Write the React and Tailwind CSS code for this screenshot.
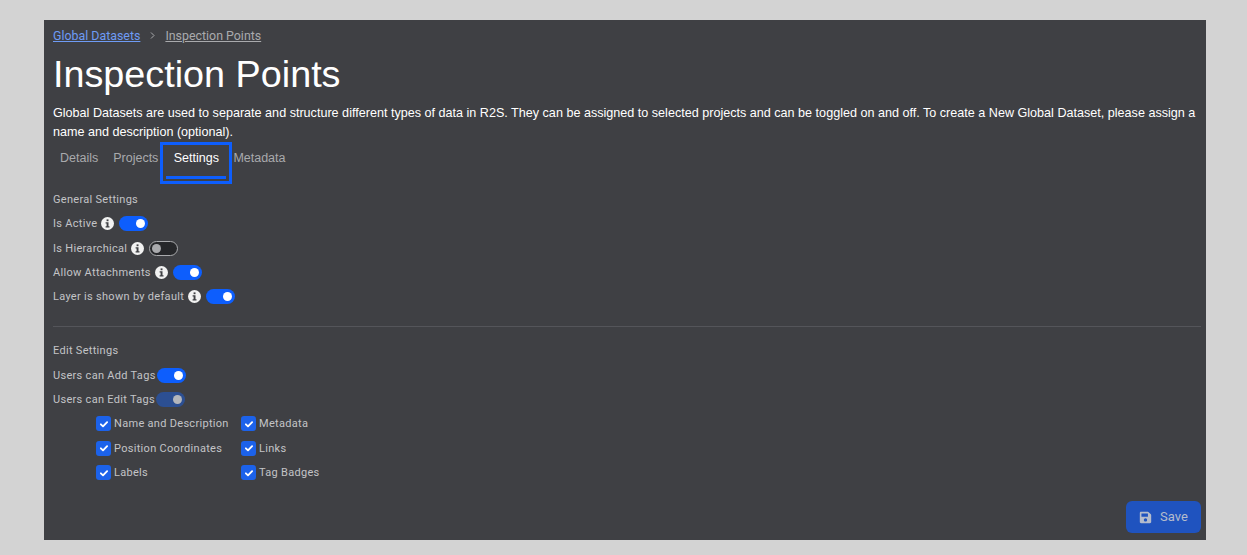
import { FaSave } from 'react-icons/fa'

const arial = '[font-family:"Liberation_Sans",Arial,sans-serif]'

function InfoDot() {
  return (
    <span className="flex h-[13px] w-[13px] items-center justify-center rounded-full bg-[#f2f2f2]">
      <svg width="7" height="9" viewBox="0 0 7 9" fill="#3f4044">
        <rect x="2.6" y="0.4" width="1.9" height="1.8" />
        <path d="M1.6 3.3h2.9v3.9h1v1.2H1.6V7.2h1V4.5h-1z" />
      </svg>
    </span>
  )
}

function Toggle({ on = true, dim = false }) {
  if (!on) {
    return (
      <span className="flex h-[15px] w-[29px] items-center rounded-full border border-[#a9aaad] bg-[#26272a] pl-[2px]">
        <span className="h-[9px] w-[9px] rounded-full bg-[#a9aaad]" />
      </span>
    )
  }
  return (
    <span className={`flex h-[15px] w-[29px] items-center justify-end rounded-full pr-[3px] ${dim ? 'bg-[#2c4f92]' : 'bg-[#0d5efd]'}`}>
      <span className={`h-[9px] w-[9px] rounded-full ${dim ? 'bg-[#b4b6bb]' : 'bg-white'}`} />
    </span>
  )
}

function SettingRow({ label, info, on, dim }) {
  return (
    <div className="flex h-[15px] items-center">
      <span className={info ? 'mr-[4px]' : 'mr-[1px]'}>{label}</span>
      {info && <span className="mr-[5px]"><InfoDot /></span>}
      <Toggle on={on} dim={dim} />
    </div>
  )
}

function Check({ label }) {
  return (
    <div className="flex h-[15px] items-center gap-[3px]">
      <span className="flex h-[15px] w-[15px] items-center justify-center rounded-[3px] bg-[#1c62ea]">
        <svg width="10" height="10" viewBox="0 0 16 16" fill="none" stroke="white" strokeWidth="3" strokeLinecap="round" strokeLinejoin="round">
          <path d="M3 8.5l3.4 3.2L13 5" />
        </svg>
      </span>
      <span>{label}</span>
    </div>
  )
}

export default function App() {
  return (
    <div className="flex h-screen flex-col overflow-hidden bg-[#d3d3d3] pl-[44px] pt-[20px] pr-[41px] pb-[15px] font-['Roboto',sans-serif]">
      <div className="flex h-[520px] flex-col bg-[#3f4044] pl-[9px] pr-[5px]">
        {/* Breadcrumb */}
        <div className="mt-[8px] flex h-[15px] items-center text-[12.4px] leading-[15px]">
          <a className="text-[#6e9bf5] underline">Global Datasets</a>
          <svg className="mx-[8px]" width="9" height="9" viewBox="0 0 9 9" fill="none" stroke="#a9aaad" strokeWidth="1">
            <path d="M3 1.5l3 3-3 3" />
          </svg>
          <a className="text-[#a9aaad] underline">Inspection Points</a>
        </div>

        {/* Header */}
        <h1 className={`mt-[9px] h-[44px] text-[37.75px] leading-[44px] font-normal text-white ${arial}`}>Inspection Points</h1>
        <p className={`mt-[8px] text-[12.6px] leading-[19px] text-white ${arial}`}>
          Global Datasets are used to separate and structure different types of data in R2S. They can be assigned to selected projects and can be toggled on and off. To create a New Global Dataset, please assign a name and description (optional).
        </p>

        {/* Tabs */}
        <div className={`flex h-[42px] items-start text-[12.5px] text-[#a9aaad] ${arial}`}>
          <span className="ml-[7px] pt-[9px] leading-[15px]">Details</span>
          <span className="ml-[15px] pt-[9px] leading-[15px]">Projects</span>
          <span className="ml-[2px] flex h-[42px] w-[72px] flex-col border-[3px] border-[#0d5efd] px-[3px] text-center text-white">
            <span className="pt-[6px] leading-[15px]">Settings</span>
            <span className="mt-auto mb-[2px] h-[3px] bg-[#0d5efd]" />
          </span>
          <span className="ml-[1px] pt-[9px] leading-[15px]">Metadata</span>
        </div>

        {/* General Settings */}
        <div className="mt-[8px] flex flex-col gap-[9.3px] text-[11px] leading-[15px] tracking-[0.3px] text-[#c3c4c7]">
          <div>General Settings</div>
          <SettingRow label="Is Active" info />
          <SettingRow label="Is Hierarchical" info on={false} />
          <SettingRow label="Allow Attachments" info />
          <SettingRow label="Layer is shown by default" info />
        </div>

        <hr className="mt-[22px] border-[#54555a]" />

        {/* Edit Settings */}
        <div className="mt-[16px] flex flex-col gap-[9.4px] text-[11px] leading-[15px] tracking-[0.3px] text-[#c3c4c7]">
          <div>Edit Settings</div>
          <SettingRow label="Users can Add Tags" />
          <SettingRow label="Users can Edit Tags" dim />
          <div className="ml-[43px] grid w-fit grid-cols-[145px_auto] gap-y-[9.4px]">
            <Check label="Name and Description" />
            <Check label="Metadata" />
            <Check label="Position Coordinates" />
            <Check label="Links" />
            <Check label="Labels" />
            <Check label="Tag Badges" />
          </div>
        </div>

        {/* Save */}
        <button className="mt-auto mb-[7px] flex h-[32px] w-[75px] items-center justify-center gap-[8px] self-end rounded-[6px] bg-[#1f53bf] text-[13px] text-[#b4bccc]">
          <FaSave size={13} />
          <span>Save</span>
        </button>
      </div>
    </div>
  )
}
